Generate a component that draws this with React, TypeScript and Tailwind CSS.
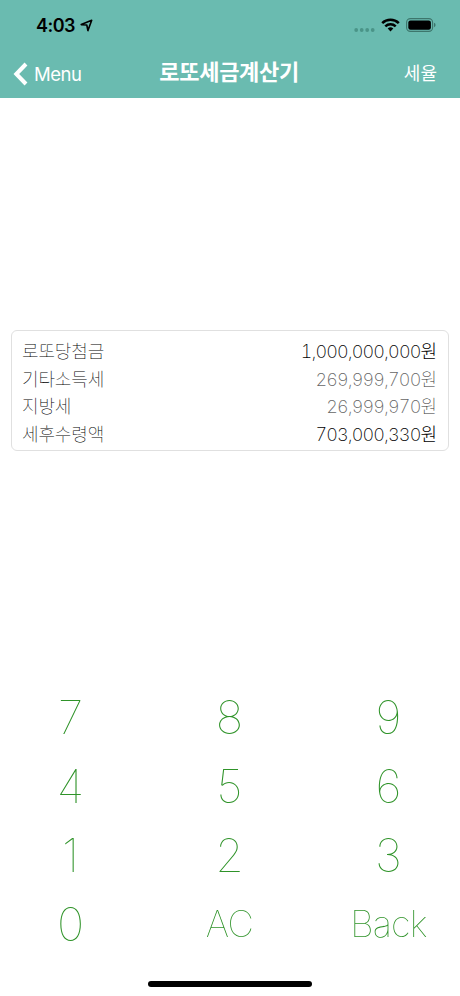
import { clsx } from 'clsx';

interface Row {
    label: string;
    amount: string;
    strong: boolean;
}

const rows: Row[] = [
    { label: '로또당첨금', amount: '1,000,000,000', strong: true },
    { label: '기타소득세', amount: '269,999,700', strong: false },
    { label: '지방세', amount: '26,999,970', strong: false },
    { label: '세후수령액', amount: '703,000,330', strong: true },
];

const keys = ['7', '8', '9', '4', '5', '6', '1', '2', '3', '0', 'AC', 'Back'];

const StatusBar = () => (
    <div className="flex h-[50px] items-center justify-between pl-[36px] pr-[24px]">
        <div className="flex items-center gap-[5px] pt-px">
            <span className="text-[18px] font-semibold leading-none tracking-[-0.5px]">4:03</span>
            <svg width="13" height="13" viewBox="0 0 13 13" fill="none" stroke="currentColor" strokeWidth="1.6" strokeLinejoin="round">
                <path d="M1.2 5.6 L11.7 1.3 L7.9 11.6 L6.8 6 Z" />
            </svg>
        </div>
        <div className="flex items-center">
            <svg width="22" height="14" viewBox="0 0 22 14" fill="#4a9488">
                <circle cx="2.2" cy="12" r="1.9" />
                <circle cx="7.7" cy="12" r="1.9" />
                <circle cx="13.2" cy="12" r="1.9" />
                <circle cx="18.7" cy="12" r="1.9" />
            </svg>
            <svg className="ml-[5px]" width="19" height="14" viewBox="0 0 19 14" fill="none" stroke="black" strokeWidth="2.5">
                <path d="M1.2 5.1 A11.8 11.8 0 0 1 17.8 5.1" />
                <path d="M4.3 8.3 A7.4 7.4 0 0 1 14.7 8.3" />
                <path d="M9.5 13.4 L6.7 10.6 A4 4 0 0 1 12.3 10.6 Z" fill="black" stroke="none" />
            </svg>
            <svg className="ml-[6px]" width="30" height="14" viewBox="0 0 30 14">
                <rect x="0.6" y="0.6" width="26" height="12.8" rx="3.8" fill="none" stroke="#3d766c" strokeWidth="1.1" />
                <rect x="2.3" y="2.4" width="22.6" height="9.3" rx="2.2" />
                <path d="M28 4.8 Q29.6 5.4 29.6 7 Q29.6 8.6 28 9.2 Z" fill="#3d766c" />
            </svg>
        </div>
    </div>
);

const NavBar = () => (
    <div className="grid h-12 grid-cols-3 items-center pl-[13px] pr-[23px] text-white">
        <button className="flex items-center gap-[6px] text-left">
            <svg width="15" height="24" viewBox="0 0 15 24" fill="none" stroke="currentColor" strokeWidth="4">
                <path d="M13 2 L3.3 12 L13 22" />
            </svg>
            <span className="pt-px text-[18.5px] leading-none tracking-[-0.5px]">Menu</span>
        </button>
        <h1 className="whitespace-nowrap pb-[5px] pl-[5px] text-center text-[22px] font-bold leading-none tracking-[-0.3px]">로또세금계산기</h1>
        <button className="text-right text-[18px] leading-none">세율</button>
    </div>
);

export default function App() {
    return (
        <div className="flex h-[996px] w-[460px] flex-col overflow-hidden bg-white font-['Inter','Noto_Sans_CJK_KR',sans-serif] text-black">
            <header className="h-[98px] shrink-0 bg-[#6abbb0]">
                <StatusBar />
                <NavBar />
            </header>

            <section className="mx-[11px] mt-[232px] flex h-[121px] shrink-0 flex-col rounded-[6px] border border-[#e0e0e0] pl-[10px] pr-[11px] pt-[7.5px]">
                {rows.map(row => (
                    <div key={row.label} className="flex h-[27.5px] items-center justify-between text-[18px] leading-none">
                        <span className="font-thin tracking-[-0.15px] text-black">{row.label}</span>
                        <span className={clsx('font-extralight tabular-nums tracking-[-0.85px]', row.strong ? 'text-black' : 'text-[#666]')}>
                            {row.amount}
                            <span className={clsx('tracking-normal', row.strong ? 'font-light' : 'font-thin text-[#333]')}>원</span>
                        </span>
                    </div>
                ))}
            </section>

            <div className="mt-[232px] grid grid-cols-[141px_141px_141px] gap-x-[18px] text-[#2f9329] will-change-transform">
                {keys.map(key => (
                    <button
                        key={key}
                        className={clsx(
                            'flex h-[68.8px] items-center justify-center font-thin leading-none',
                            key.length > 1 ? 'text-[36.5px] tracking-[-0.8px]' : 'text-[46px]'
                        )}
                    >
                        {key}
                    </button>
                ))}
            </div>

            <div className="mx-auto mt-auto mb-[9px] h-[6px] w-[164px] rounded-full bg-black" />
        </div>
    );
}
